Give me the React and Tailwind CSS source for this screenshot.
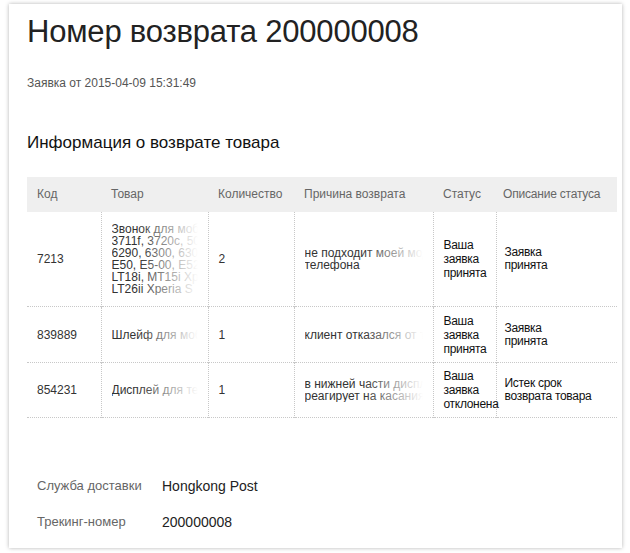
export default function App() {
  const fade = "pointer-events-none absolute right-0 top-0 h-full w-[60px] bg-gradient-to-r from-transparent to-white";
  const cell = "border-r border-dotted border-[#c8c8c8] px-[10px] align-middle";
  const Fade = ({ children, cls = "" }) => (
    <div className={"relative overflow-hidden whitespace-nowrap " + cls}>
      {children}
      <div className={fade}></div>
    </div>
  );
  const rows = [
    {
      h: "h-[95px]", code: "7213",
      good: ["Звонок для мобильного", "3711f, 3720c, 5000", "6290, 6300, 6303c", "E50, E5-00, E52", "LT18i, MT15i Xperia", "LT26ii Xperia S"],
      qty: "2",
      reason: ["не подходит моей модели", "телефона"],
      status: ["Ваша", "заявка", "принята"],
      desc: ["Заявка", "принята"],
    },
    {
      h: "h-[56px]", code: "839889",
      good: ["Шлейф для мобильного"],
      qty: "1",
      reason: ["клиент отказался от товара"],
      status: ["Ваша", "заявка", "принята"],
      desc: ["Заявка", "принята"],
    },
    {
      h: "h-[55px]", code: "854231",
      good: ["Дисплей для телефона"],
      qty: "1",
      reason: ["в нижней части дисплея не", "реагирует на касания"],
      status: ["Ваша", "заявка", "отклонена"],
      desc: ["Истек срок", "возврата товара"],
    },
  ];
  return (
    <div className="min-h-[553px] bg-white pt-[4px] pl-[9px] pr-[8px] pb-[5px]" style={{ fontFamily: '"Liberation Sans", Arial, sans-serif' }}>
      <div className="h-[544px] bg-white shadow-[0_0_4px_rgba(0,0,0,0.3)] pl-[18px] pr-[4px]">
        <h1 className="pt-[8px] text-[31px] leading-[40px] text-[#222] tracking-[-0.2px]">Номер возврата 200000008</h1>
        <div className="mt-[22px] text-[12px] text-[#555]">Заявка от 2015-04-09 15:31:49</div>
        <h2 className="mt-[38px] text-[17px] text-[#111]">Информация о возврате товара</h2>
        <table className="mt-[21px] w-[590px] table-fixed border-collapse text-[12px] text-[#333]">
          <thead>
            <tr className="h-[35px] bg-[#efefef] text-left text-[#666]">
              <th className="w-[74px] pl-[10px] font-normal">Код</th>
              <th className="w-[107px] pl-[10px] font-normal">Товар</th>
              <th className="w-[86px] pl-[10px] font-normal whitespace-nowrap">Количество</th>
              <th className="w-[139px] pl-[10px] font-normal whitespace-nowrap">Причина возврата</th>
              <th className="w-[63px] pl-[10px] font-normal">Статус</th>
              <th className="pl-[7px] font-normal whitespace-nowrap tracking-[-0.2px]">Описание статуса</th>
            </tr>
          </thead>
          <tbody>
            {rows.map((r) => (
              <tr key={r.code} className={r.h + " border-b border-dotted border-[#c8c8c8]"}>
                <td className={cell}>{r.code}</td>
                <td className={cell + " leading-[12px]"}>
                  <Fade cls="w-[86px]">{r.good.map((l) => <div key={l}>{l}</div>)}</Fade>
                </td>
                <td className={cell}>{r.qty}</td>
                <td className={cell + " leading-[12px]"}>
                  <Fade cls="w-[118px]">{r.reason.map((l) => <div key={l}>{l}</div>)}</Fade>
                </td>
                <td className={cell + " px-[5px] leading-[14px] text-[#111] tracking-[-0.3px] whitespace-nowrap"}>{r.status.map((l) => <div key={l}>{l}</div>)}</td>
                <td className="px-[8px] align-middle leading-[13px] text-[#111] tracking-[-0.3px] whitespace-nowrap">{r.desc.map((l) => <div key={l}>{l}</div>)}</td>
              </tr>
            ))}
          </tbody>
        </table>
        <div className="mt-[60px] grid grid-cols-[125px_1fr] gap-y-[20px] pl-[10px] text-[13px] leading-[16px]">
          <div className="text-[#666]">Служба доставки</div>
          <div className="text-[14px] text-[#222]">Hongkong Post</div>
          <div className="text-[#666]">Трекинг-номер</div>
          <div className="text-[14px] text-[#222]">200000008</div>
        </div>
      </div>
    </div>
  );
}
